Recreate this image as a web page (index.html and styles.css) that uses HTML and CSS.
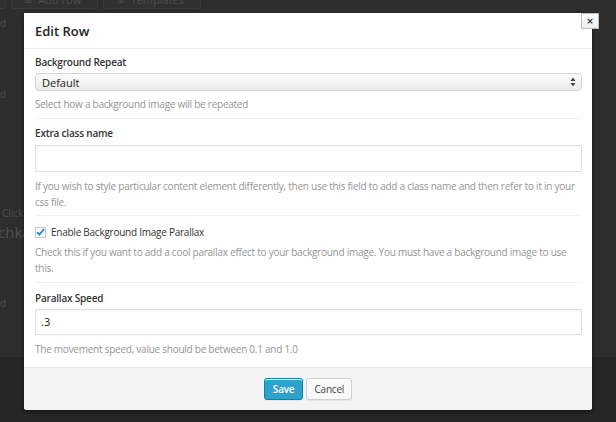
FILE: index.html
```html
<!DOCTYPE html>
<html lang="en">
<head>
<meta charset="utf-8">
<title>Edit Row</title>
<link rel="stylesheet" href="styles.css">
</head>
<body>
<div class="page">
  <div class="toolbar">
    <span class="tb-btn tb-small">t</span>
    <span class="tb-btn"><span class="tb-ico">&#8801;</span> Add row</span>
    <span class="tb-btn"><span class="tb-ico">&#8801;</span> Templates</span>
  </div>
  <div class="bg-content">
    <p class="bg-line l1">d</p>
    <p class="bg-line l2">d</p>
    <p class="bg-line l3">Click</p>
    <p class="bg-big">chka</p>
    <p class="bg-line l4">d</p>
  </div>
</div>

<div class="modal">
  <button class="close" type="button">&times;</button>
  <div class="modal-header">Edit Row</div>
  <div class="modal-body">
    <div class="section s1">
      <div class="label">Background Repeat</div>
      <div class="select">
        <span>Default</span>
        <svg class="arrows" width="6" height="10" viewBox="0 0 6 10"><path d="M3 0.5 L5.5 4 L0.5 4 Z M3 9.5 L5.5 6 L0.5 6 Z" fill="#444"/></svg>
      </div>
      <div class="help">Select how a background image will be repeated</div>
    </div>
    <div class="section s2">
      <div class="label">Extra class name</div>
      <div class="input tall"></div>
      <div class="help">If you wish to style particular content element differently, then use this field to add a class name and then refer to it in your css file.</div>
    </div>
    <div class="section s3">
      <label class="check-row">
        <span class="checkbox">
          <svg width="9" height="8" viewBox="0 0 9 8"><path d="M1 4.2 L3.4 6.6 L8 1" fill="none" stroke="#1e8cbe" stroke-width="1.8"/></svg>
        </span>
        <span class="check-label">Enable Background Image Parallax</span>
      </label>
      <div class="help">Check this if you want to add a cool parallax effect to your background image. You must have a background image to use this.</div>
    </div>
    <div class="section s4">
      <div class="label">Parallax Speed</div>
      <div class="input">.3</div>
      <div class="help">The movement speed, value should be between 0.1 and 1.0</div>
    </div>
  </div>
  <div class="modal-footer">
    <button class="btn btn-primary" type="button">Save</button>
    <button class="btn" type="button">Cancel</button>
  </div>
</div>
</body>
</html>
```
FILE: styles.css
```css
html, body {
  margin: 0;
  padding: 0;
}
body {
  width: 616px;
  height: 422px;
  overflow: hidden;
  background: #262626;
  font-family: "Open Sans", "DejaVu Sans", sans-serif;
  position: relative;
}
.page {
  height: 367px;
  background: #2d2d2d;
}
.toolbar {
  display: flex;
  gap: 5px;
  margin-top: -10px;
  padding-left: 0;
}
.tb-btn {
  display: inline-flex;
  align-items: center;
  gap: 6px;
  height: 17px;
  padding: 0 16px 0 12px;
  border: 1px solid #3c3c3c;
  border-radius: 3px;
  color: #4f4f4f;
  font-size: 11px;
  background: #303030;
}
.tb-small {
  padding: 0 4px;
  margin-left: -8px;
}
.tb-ico {
  font-size: 10px;
}
.bg-content {
  position: relative;
  color: #505050;
  font-size: 10px;
}
.bg-line, .bg-big {
  margin: 0;
  position: absolute;
  left: 0;
}
.l1 { top: 7px; }
.l2 { top: 78px; }
.l3 { top: 197px; left: 2px; }
.l4 { top: 287px; }
.bg-big {
  top: 213px;
  font-size: 15px;
  left: -2px;
}

.modal {
  position: absolute;
  left: 24px;
  top: 13px;
  width: 568px;
  height: 397px;
  background: #fff;
  border-radius: 0 0 3px 3px;
  box-shadow: 0 2px 4px rgba(0,0,0,0.5);
  display: flex;
  flex-direction: column;
}
.close {
  position: absolute;
  top: 0;
  right: -7px;
  width: 18px;
  height: 16px;
  padding: 0;
  border: 1px solid #bdbdbd;
  background: linear-gradient(#fdfdfd, #ececec);
  color: #333;
  font-size: 9px;
  font-weight: 700;
  line-height: 13px;
  font-family: "DejaVu Sans", sans-serif;
}
.modal-header {
  height: 36px;
  line-height: 36px;
  padding: 0 11px;
  font-size: 13px;
  font-weight: 600;
  color: #222;
  border-bottom: 1px solid #ececec;
  box-sizing: border-box;
}
.modal-body {
  flex: 1;
  padding: 0 10px 0 11px;
}
.section {
  border-bottom: 1px solid #f1f1f1;
}
.section:last-child {
  border-bottom: none;
}
.s1 { padding: 6px 0 6px; }
.s2 { padding: 7px 0 5px; }
.s3 { padding: 9px 0 6px; }
.s4 { padding: 8px 0 0; }
.label {
  font-size: 10px;
  letter-spacing: -0.2px;
  font-weight: 600;
  color: #333;
  line-height: 14px;
  margin-bottom: 4px;
}
.s2 .label { margin-bottom: 5px; }
.select {
  height: 18px;
  box-sizing: border-box;
  border: 1px solid #d4d4d4;
  border-radius: 4px;
  background: linear-gradient(#fbfbfb, #ececec);
  display: flex;
  align-items: center;
  justify-content: space-between;
  padding: 0 5px 0 6px;
  font-size: 11px;
  color: #222;
}
.arrows {
  display: block;
}
.input {
  height: 26px;
  box-sizing: border-box;
  border: 1px solid #dfdfdf;
  box-shadow: inset 0 1px 2px rgba(0,0,0,0.04);
  background: #fff;
  font-size: 11px;
  color: #222;
  padding: 0 5px;
  line-height: 24px;
}
.input.tall {
  height: 27px;
}
.help {
  font-size: 10px;
  letter-spacing: -0.25px;
  color: #959595;
  line-height: 16px;
  margin-top: 5px;
}
.s2 .help, .s4 .help { margin-top: 6px; }
.check-row {
  display: flex;
  align-items: center;
  gap: 5px;
  height: 14px;
}
.checkbox {
  width: 11px;
  height: 11px;
  box-sizing: border-box;
  border: 1px solid #c8c8c8;
  background: #fff;
  display: flex;
  align-items: center;
  justify-content: center;
  box-shadow: inset 0 1px 2px rgba(0,0,0,0.08);
}
.checkbox svg { display: block; }
.check-label {
  font-size: 10px;
  letter-spacing: -0.25px;
  color: #333;
}
.modal-footer {
  height: 43px;
  box-sizing: border-box;
  background: #f3f3f3;
  border-top: 1px solid #e9e9e9;
  border-radius: 0 0 3px 3px;
  display: flex;
  justify-content: center;
  align-items: center;
  gap: 3px;
}
.btn {
  height: 22px;
  padding: 0 7px;
  border: 1px solid #cfcfcf;
  border-radius: 3px;
  background: #f9f9f9;
  color: #444;
  font-family: "Open Sans", sans-serif;
  font-size: 10px;
  letter-spacing: -0.2px;
  box-shadow: 0 1px 0 #fff inset, 0 1px 0 rgba(0,0,0,0.05);
}
.btn-primary {
  background: #2ea2cc;
  border-color: #0e7fa8;
  color: #fff;
  font-weight: 600;
  padding: 0 8px;
}
```
